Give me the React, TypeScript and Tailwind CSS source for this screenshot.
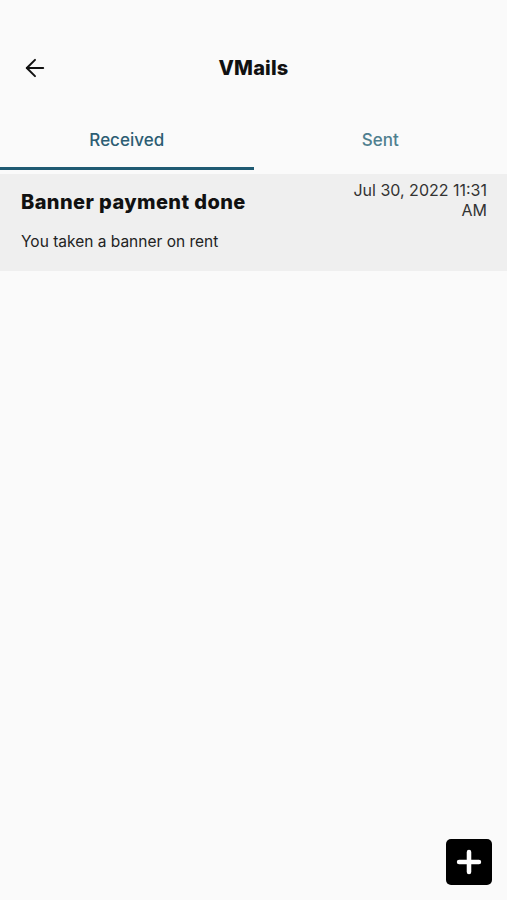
import React from "react";
import { useState } from "react";
import { ArrowLeft, Plus } from "lucide-react";

const App = () => {
  const [tab, setTab] = useState("received");

  return (
    <div className="relative flex min-h-[900px] w-full flex-col bg-[#fafafa] font-['Inter',sans-serif]">
      {/* status bar */}
      <div className="h-[44px]" />

      {/* header */}
      <div className="relative flex h-[48px] items-center justify-center">
        <button className="absolute left-[21px] top-[10px] text-[#111]">
          <ArrowLeft size={28} strokeWidth={1.7} />
        </button>
        <div className="text-[20px] font-extrabold tracking-[0.2px] text-[#111]">VMails</div>
      </div>

      {/* tabs */}
      <div className="flex h-[78px]">
        <button
          onClick={() => setTab("received")}
          className={
            tab === "received"
              ? "flex flex-1 items-end justify-center border-b-[3px] border-[#1f5a72] pb-[14px] text-[17px] font-medium text-[#2c5d73]"
              : "flex flex-1 items-end justify-center pb-[17px] text-[17px] font-medium text-[#4f7f8f]"
          }
        >
          Received
        </button>
        <button
          onClick={() => setTab("sent")}
          className={
            tab === "sent"
              ? "flex flex-1 items-end justify-center border-b-[3px] border-[#1f5a72] pb-[14px] text-[17px] font-medium text-[#2c5d73]"
              : "flex flex-1 items-end justify-center pb-[17px] text-[17px] font-medium text-[#4f7f8f]"
          }
        >
          Sent
        </button>
      </div>

      {/* list */}
      {tab === "received" && (
        <div className="mt-[4px] flex items-start justify-between bg-[#efefef] pb-[18px] pl-[21px] pr-[20px] pt-[6px]">
          <div className="mt-[8px] flex flex-col">
            <div className="text-[20px] font-extrabold leading-[28px] tracking-[0.4px] text-[#111]">Banner payment done</div>
            <div className="mt-[15px] text-[15.5px] leading-[22px] text-[#222]">You taken a banner on rent</div>
          </div>
          <div className="text-right text-[16px] leading-[20px] text-[#333]">
            Jul 30, 2022 11:31
            <br />
            AM
          </div>
        </div>
      )}

      {/* add button */}
      <button className="absolute bottom-[15px] right-[15px] flex h-[46px] w-[46px] items-center justify-center rounded-[5px] bg-black text-white">
        <Plus size={34} strokeWidth={3.2} />
      </button>
    </div>
  );
};

export default App;
